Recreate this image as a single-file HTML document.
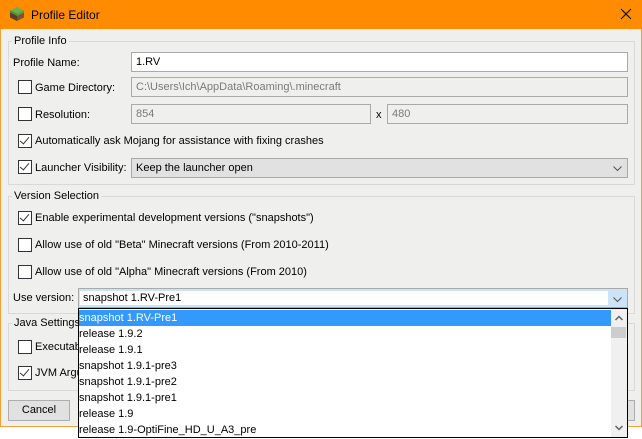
<!DOCTYPE html>
<html><head><style>
*{box-sizing:border-box;margin:0;padding:0}
body{width:642px;height:439px;background:#fff;font-family:"Liberation Sans",sans-serif;font-size:11px;color:#000;position:relative;overflow:hidden}
.a{position:absolute;white-space:nowrap}
.win{position:absolute;left:0;top:0;width:642px;height:427px;background:#eff0ee;border:1px solid #f5a13a;border-top:none}
.title{position:absolute;left:0;top:0;width:642px;height:29px;background:#ff8c00}
.grp{position:absolute;border:1px solid #d9dad8}
.lab{position:absolute;background:#eff0ee;padding:0 2px}
.in{position:absolute;border:1px solid #a9a9a9;height:20px;padding:2px 4px;line-height:15px}
.cb{position:absolute;width:14px;height:14px;border:1px solid #333;background:#fff}
.cb.c::after{content:"";position:absolute;left:3px;top:0px;width:4px;height:8px;border:solid #333;border-width:0 1.5px 1.5px 0;transform:rotate(40deg)}
.item{position:absolute;left:0;width:532px;height:16px;line-height:16px}
.t{margin-top:1px}
</style></head><body>
<div class="win"></div>
<div class="title"></div>
<svg class="a" style="left:9px;top:6px" width="16" height="16" viewBox="0 0 16 16"><polygon points="8,1 15,4.5 8,8 1,4.5" fill="#6ab04c"/><polygon points="1,4.5 8,8 8,15 1,11.5" fill="#5a3d22"/><polygon points="15,4.5 8,8 8,15 15,11.5" fill="#7a5533"/><polygon points="1,4.5 8,8 8,10 1,6.5" fill="#4f8f35"/><polygon points="15,4.5 8,8 8,10 15,6.5" fill="#5ea03f"/></svg>
<div class="a" style="left:31px;top:8px;font-size:12px">Profile Editor</div>
<svg class="a" style="left:620px;top:8px" width="12" height="12"><path d="M1 1L11 11M11 1L1 11" stroke="#000" stroke-width="1.1"/></svg>

<div class="grp" style="left:8px;top:41px;width:627px;height:144px"></div>
<div class="lab a" style="left:12px;top:35px">Profile Info</div>
<div class="a" style="left:13px;top:57px">Profile Name:</div>
<div class="in" style="left:131px;top:52px;width:497px;background:#fff">1.RV</div>
<div class="cb" style="left:18px;top:80px"></div>
<div class="a" style="left:35px;top:82px">Game Directory:</div>
<div class="in" style="left:131px;top:77px;width:497px;color:#7a7a7a">C:\Users\Ich\AppData\Roaming\.minecraft</div>
<div class="cb" style="left:18px;top:107px"></div>
<div class="a" style="left:35px;top:109px">Resolution:</div>
<div class="in" style="left:131px;top:104px;width:240px;color:#7a7a7a">854</div>
<div class="a" style="left:376px;top:109px">x</div>
<div class="in" style="left:387px;top:104px;width:241px;color:#7a7a7a">480</div>
<div class="cb c" style="left:18px;top:134px"></div>
<div class="a" style="left:35px;top:135px">Automatically ask Mojang for assistance with fixing crashes</div>
<div class="cb c" style="left:18px;top:160px"></div>
<div class="a" style="left:35px;top:162px">Launcher Visibility:</div>
<div class="in" style="left:131px;top:158px;width:497px;background:#e1e1e1">Keep the launcher open</div>
<svg class="a" style="left:613px;top:166px" width="9" height="6"><path d="M0.5 0.5L4.5 4.5L8.5 0.5" stroke="#555" fill="none"/></svg>

<div class="grp" style="left:8px;top:196px;width:627px;height:118px"></div>
<div class="lab a" style="left:12px;top:190px">Version Selection</div>
<div class="cb c" style="left:18px;top:211px"></div>
<div class="a" style="left:35px;top:212px">Enable experimental development versions ("snapshots")</div>
<div class="cb" style="left:18px;top:238px"></div>
<div class="a" style="left:35px;top:239px">Allow use of old "Beta" Minecraft versions (From 2010-2011)</div>
<div class="cb" style="left:18px;top:265px"></div>
<div class="a" style="left:35px;top:266px">Allow use of old "Alpha" Minecraft versions (From 2010)</div>
<div class="a" style="left:13px;top:292px">Use version:</div>
<div class="in" style="left:78px;top:288px;width:550px;height:20px;background:#cce4f7"><div style="position:absolute;left:1px;top:2px;width:528px;height:14px;background:#fff"></div><span style="position:relative">snapshot 1.RV-Pre1</span></div>
<svg class="a" style="left:613px;top:297px" width="9" height="6"><path d="M0.5 0.5L4.5 4.5L8.5 0.5" stroke="#555" fill="none"/></svg>

<div class="grp" style="left:8px;top:323px;width:627px;height:68px"></div>
<div class="lab a" style="left:12px;top:317px">Java Settings</div>
<div class="cb" style="left:18px;top:340px"></div>
<div class="a" style="left:35px;top:341px">Executable</div>
<div class="cb c" style="left:18px;top:366px"></div>
<div class="a" style="left:35px;top:367px">JVM Arguments</div>
<div class="a" style="left:8px;top:400px;width:62px;height:21px;border:1px solid #adadad;background:#e1e1e1;text-align:center;line-height:19px">Cancel</div>
<div class="a" style="left:626px;top:400px;width:9px;height:21px;border:1px solid #adadad;border-left:none;background:#e1e1e1"></div>

<div class="a" style="left:78px;top:308px;width:550px;height:130px;border:1px solid #000;background:#fff">
<div class="item" style="top:1px;background:#3399ff;color:#fff">snapshot 1.RV-Pre1</div>
<div class="item" style="top:17px">release 1.9.2</div>
<div class="item" style="top:33px">release 1.9.1</div>
<div class="item" style="top:49px">snapshot 1.9.1-pre3</div>
<div class="item" style="top:65px">snapshot 1.9.1-pre2</div>
<div class="item" style="top:81px">snapshot 1.9.1-pre1</div>
<div class="item" style="top:97px">release 1.9</div>
<div class="item" style="top:113px">release 1.9-OptiFine_HD_U_A3_pre</div>
<div style="position:absolute;left:532px;top:0;width:16px;height:128px;background:#f0f0f0">
<div style="position:absolute;left:0;top:18px;width:15px;height:11px;background:#cdcdcd"></div>
<svg style="position:absolute;left:4px;top:6px" width="8" height="6"><path d="M0.5 5L4 1.5L7.5 5" stroke="#606060" stroke-width="1.5" fill="none"/></svg>
<svg style="position:absolute;left:4px;top:116px" width="8" height="6"><path d="M0.5 1L4 4.5L7.5 1" stroke="#606060" stroke-width="1.5" fill="none"/></svg>
</div>
</div>
</body></html>
